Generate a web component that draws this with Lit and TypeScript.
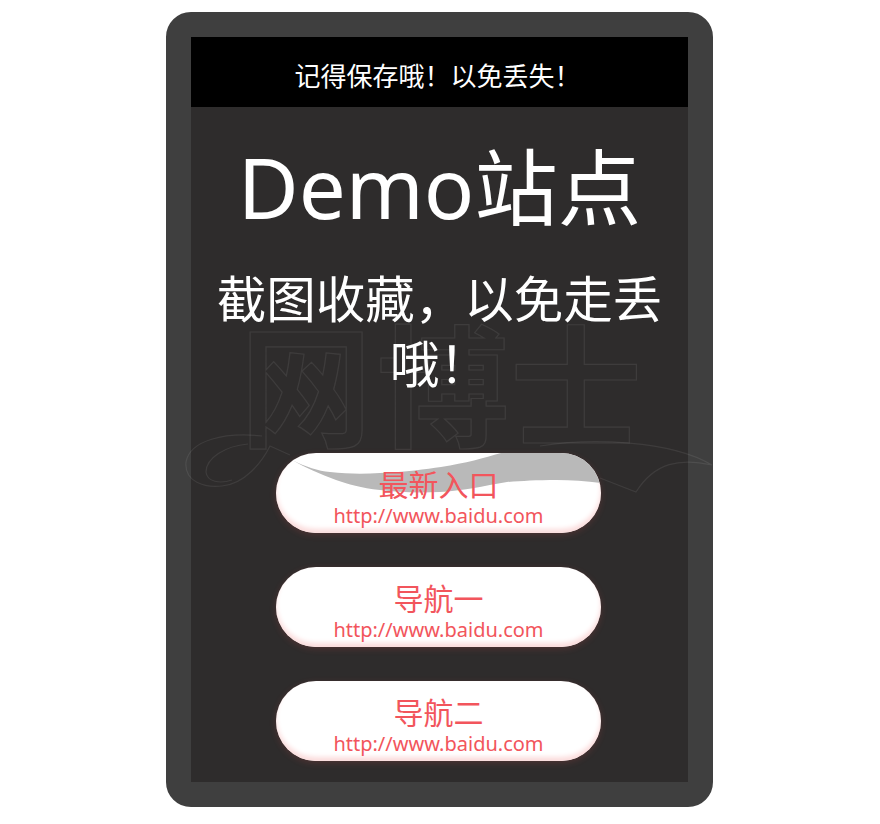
import { LitElement, html, css, svg } from "lit";
import { customElement } from "lit/decorators.js";

const LINKS = [
  { name: "最新入口", url: "http://www.baidu.com", swoosh: true },
  { name: "导航一", url: "http://www.baidu.com", swoosh: false },
  { name: "导航二", url: "http://www.baidu.com", swoosh: false },
];

const NOTICE = "记得保存哦\uFF01以免丢失\uFF01";
const SUB = "截图收藏\uFF0C以免走丢哦\uFF01";

@customElement("app-root")
export class AppRoot extends LitElement {
  static styles = css`
    :host {
      display: flex;
      justify-content: center;
      padding: 12px 1px 17px 0;
      background: #fff;
      font-family: "Noto Sans", "Noto Sans CJK SC", sans-serif;
      box-sizing: border-box;
      height: 824px;
      overflow: hidden;
    }
    .frame {
      position: relative;
      width: 547px;
      height: 795px;
      box-sizing: border-box;
      border: 25px solid #3f3f3f;
      border-radius: 25px;
      background: #2e2c2c;
    }
    .notice {
      height: 70px;
      padding-right: 4px;
      background: #000;
      color: #fff;
      font-size: 26px;
      line-height: 76px;
      text-align: center;
      white-space: nowrap;
      font-family: "Noto Sans CJK SC", sans-serif;
    }
    .title {
      margin: 0;
      padding-top: 32px;
      color: #fff;
      font-size: 83.5px;
      line-height: 96px;
      font-weight: 400;
      text-align: center;
      white-space: nowrap;
    }
    .sub {
      margin: 0;
      padding: 29px 20px 0;
      color: #fff;
      font-size: 49.5px;
      line-height: 65px;
      font-weight: 400;
      text-align: center;
      font-family: "Noto Sans CJK SC", sans-serif;
    }
    .links {
      display: flex;
      flex-direction: column;
      align-items: center;
      gap: 34px;
      padding: 59px 2px 0 0;
    }
    .btn {
      position: relative;
      overflow: hidden;
      width: 325px;
      height: 80px;
      border-radius: 40px;
      background: #fff;
      box-shadow: inset 0 -4px 5px #fbdcdc, 0 2px 7px rgba(255, 90, 90, 0.16);
      color: #f2555c;
      text-align: center;
      text-decoration: none;
      display: block;
    }
    .swoosh {
      position: absolute;
      left: 0;
      top: 0;
      width: 325px;
      height: 80px;
    }
    .name {
      position: relative;
      display: block;
      font-size: 30px;
      line-height: 36px;
      padding-top: 14px;
    }
    .url {
      position: relative;
      display: block;
      margin-top: 1px;
      font-size: 20px;
      line-height: 24px;
    }
    .mark {
      position: absolute;
      left: 0;
      top: 0;
      width: 547px;
      height: 795px;
      margin: -25px;
      pointer-events: none;
      overflow: visible;
    }
    .mark text {
      font-family: "Noto Sans CJK SC", sans-serif;
      font-weight: 700;
      font-size: 132px;
      fill: none;
      stroke: rgba(255, 255, 255, 0.08);
      stroke-width: 1.2;
    }
    .mark path {
      fill: none;
      stroke: rgba(255, 255, 255, 0.08);
      stroke-width: 1.2;
    }
  `;

  render() {
    return html`
      <div class="frame">
        <div class="notice">${NOTICE}</div>
        <h1 class="title">Demo站点</h1>
        <h2 class="sub">${SUB}</h2>
        <svg class="mark" viewBox="166 12 547 795">
          ${svg`
            <text x="240" y="437">网</text>
            <text x="377" y="437">博</text>
            <text x="510" y="437">士</text>
            <path d="M262 436 C225 432 190 440 186 462 C184 482 205 488 222 486 C245 484 262 462 270 446 L290 455" />
            <path d="M248 444 C225 446 206 458 206 472 C207 482 220 484 232 480" />
            <path d="M540 446 C590 438 670 440 712 465 C680 458 655 462 636 492 L600 478" />
          `}
        </svg>
        <div class="links">
          ${LINKS.map(
            (l) => html`
              <a class="btn">
                ${l.swoosh
                  ? html`<svg class="swoosh" viewBox="0 0 325 80">
                      <path
                        fill="#b9b9b9"
                        d="M16 7 C30 14 42 18 54 19 C72 21 88 21 104 20 C130 19 150 16 165 14 C190 10 208 5 225 0 L325 0 L325 30 C310 28 295 27 281 27 C260 27 245 28 231 29 C208 33 185 38 164 39 C140 40 120 39 104 37 C85 35 72 31 60 27 C44 21 30 15 16 7 Z"
                      />
                    </svg>`
                  : ""}
                <span class="name">${l.name}</span>
                <span class="url">${l.url}</span>
              </a>
            `
          )}
        </div>
      </div>
    `;
  }
}
